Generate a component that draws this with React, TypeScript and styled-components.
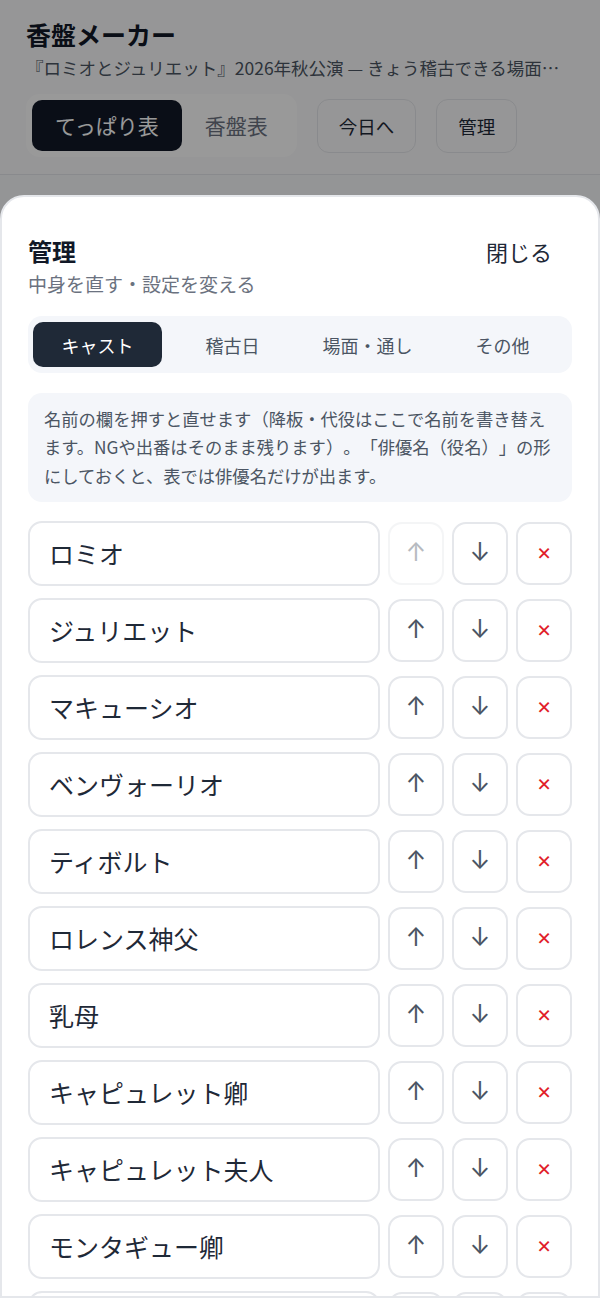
import styled, { createGlobalStyle } from "styled-components";

const GlobalStyle = createGlobalStyle`
  html, body {
    margin: 0;
    padding: 0;
    background: #f7f8fa;
  }
  * {
    box-sizing: border-box;
  }
  body {
    font-family: "Noto Sans CJK JP", "Noto Sans", sans-serif;
    color: #111827;
  }
`;

const cast = [
  "ロミオ",
  "ジュリエット",
  "マキューシオ",
  "ベンヴォーリオ",
  "ティボルト",
  "ロレンス神父",
  "乳母",
  "キャピュレット卿",
  "キャピュレット夫人",
  "モンタギュー卿",
  "モンタギュー夫人",
  "パリス",
];

const tabs = ["キャスト", "稽古日", "場面・通し", "その他"];

const App = () => {
  return (
    <Page>
      <GlobalStyle />
      <Header>
        <AppTitle>香盤メーカー</AppTitle>
        <AppSub>『ロミオとジュリエット』2026年秋公演 — きょう稽古できる場面と出番を一覧にします</AppSub>
        <Toolbar>
          <Segment>
            <SegButton $active>てっぱり表</SegButton>
            <SegButton>香盤表</SegButton>
          </Segment>
          <GhostButton>今日へ</GhostButton>
          <GhostButton>管理</GhostButton>
        </Toolbar>
      </Header>

      <Backdrop />

      <Sheet>
        <SheetHead>
          <div>
            <SheetTitle>管理</SheetTitle>
            <SheetSub>中身を直す・設定を変える</SheetSub>
          </div>
          <CloseButton>閉じる</CloseButton>
        </SheetHead>

        <Tabs>
          {tabs.map((t, i) => (
            <Tab key={t} $active={i === 0}>
              {t}
            </Tab>
          ))}
        </Tabs>

        <Note>
          名前の欄を押すと直せます（降板・代役はここで名前を書き替えます。NGや出番はそのまま残ります）。「俳優名（役名）」の形にしておくと、表では俳優名だけが出ます。
        </Note>

        <List>
          {cast.map((name, i) => (
            <Row key={name}>
              <NameInput defaultValue={name} />
              <IconButton disabled={i === 0} aria-label="上へ">↑</IconButton>
              <IconButton aria-label="下へ">↓</IconButton>
              <IconButton $danger aria-label="削除">×</IconButton>
            </Row>
          ))}
        </List>
      </Sheet>
    </Page>
  );
};

export default App;

const Page = styled.div`
  position: relative;
  height: 100vh;
  overflow: hidden;
  background: #f7f8fa;
`;

const Header = styled.header`
  padding: 17px 26px 17px;
  background: #fbfbfc;
  border-bottom: 1px solid #e5e7eb;
`;

const AppTitle = styled.h1`
  margin: 0;
  font-size: 25px;
  line-height: 34px;
  font-weight: 700;
  color: #111827;
`;

const AppSub = styled.div`
  margin-top: 4px;
  font-size: 17.5px;
  line-height: 26px;
  color: #4b5563;
  white-space: nowrap;
  overflow: hidden;
  text-overflow: ellipsis;
`;

const Toolbar = styled.div`
  display: flex;
  align-items: center;
  gap: 20px;
  margin-top: 13px;
`;

const Segment = styled.div`
  display: flex;
  padding: 6px;
  border-radius: 14px;
  background: #ffffff;
`;

const SegButton = styled.button<{ $active?: boolean }>`
  border: 0;
  font-family: inherit;
  font-size: 21px;
  line-height: 51px;
  padding: 0 23px;
  border-radius: 10px;
  background: ${(p) => (p.$active ? "#111827" : "transparent")};
  color: ${(p) => (p.$active ? "#ffffff" : "#6b7280")};
`;

const GhostButton = styled.button`
  height: 54px;
  padding: 0 21px;
  border: 1.5px solid #e5e7eb;
  border-radius: 12px;
  background: #fbfbfc;
  font-family: inherit;
  font-size: 18.5px;
  color: #1f2937;
`;

const Backdrop = styled.div`
  position: absolute;
  inset: 0;
  background: rgba(0, 0, 0, 0.4);
`;

const Sheet = styled.section`
  position: absolute;
  top: 195px;
  left: 0;
  right: 0;
  bottom: 0;
  overflow: hidden;
  padding: 38px 26px 0;
  background: #ffffff;
  border: 2px solid #e5e7eb;
  border-radius: 24px 24px 0 0;
`;

const SheetHead = styled.div`
  display: flex;
  justify-content: space-between;
  align-items: flex-start;
`;

const SheetTitle = styled.h2`
  margin: 0;
  font-size: 24px;
  line-height: 32px;
  font-weight: 700;
  color: #111827;
`;

const SheetSub = styled.div`
  margin-top: 4px;
  font-size: 19px;
  line-height: 26px;
  color: #6b7280;
`;

const CloseButton = styled.button`
  border: 0;
  background: transparent;
  font-family: inherit;
  font-size: 22px;
  line-height: 32px;
  padding: 0 20px;
  color: #1f2937;
`;

const Tabs = styled.div`
  display: grid;
  grid-template-columns: repeat(4, 1fr);
  gap: 6px;
  margin-top: 19px;
  padding: 6px 5px;
  border-radius: 14px;
  background: #f4f6fa;
`;

const Tab = styled.div<{ $active?: boolean }>`
  height: 45px;
  display: flex;
  align-items: center;
  justify-content: center;
  border-radius: 10px;
  font-size: 18px;
  background: ${(p) => (p.$active ? "#1f2937" : "transparent")};
  color: ${(p) => (p.$active ? "#ffffff" : "#4b5563")};
`;

const Note = styled.p`
  margin: 20px 0 0;
  padding: 11.5px 14px 11.5px 16px;
  border-radius: 14px;
  background: #f4f6fa;
  font-size: 17.3px;
  line-height: 28.5px;
  color: #4b5563;
  text-spacing-trim: space-all;
`;

const List = styled.div`
  display: flex;
  flex-direction: column;
  gap: 12px;
  margin-top: 19px;
`;

const Row = styled.div`
  display: flex;
  gap: 8px;
  height: 65px;
`;

const NameInput = styled.input`
  flex: 1;
  min-width: 0;
  padding: 0 19px;
  border: 2px solid #e5e7eb;
  border-radius: 14px;
  background: #ffffff;
  font-family: inherit;
  font-size: 25px;
  color: #1f2937;
  outline: none;
`;

const IconButton = styled.button<{ $danger?: boolean }>`
  width: 56px;
  margin: 1px 0;
  display: flex;
  align-items: center;
  justify-content: center;
  padding: 0 0 2px;
  border: 2px solid #e5e7eb;
  border-radius: 14px;
  background: #ffffff;
  font-family: Inter, "DejaVu Sans", sans-serif;
  font-weight: 400;
  font-size: ${(p) => (p.$danger ? "23px" : "25px")};
  line-height: 1;
  color: ${(p) => (p.$danger ? "#e11d2a" : "#4b5563")};

  &:disabled {
    opacity: 0.4;
  }
`;
